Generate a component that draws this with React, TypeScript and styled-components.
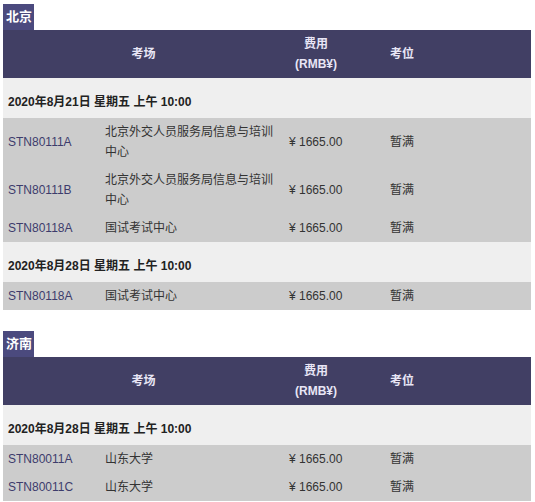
import React from "react";
import styled, { createGlobalStyle } from "styled-components";

const Global = createGlobalStyle`
  html, body { margin: 0; padding: 0; background: #ffffff; }
  body {
    font-family: "Liberation Sans", "Noto Sans CJK SC", Arial, sans-serif;
    font-size: 12px;
    color: #333333;
  }
`;

const Page = styled.div`
  width: 535px;
  padding: 4px 4px 0 3px;
  box-sizing: border-box;
  display: flex;
  flex-direction: column;
  gap: 21px;
`;

const Section = styled.section`
  display: flex;
  flex-direction: column;
  align-items: flex-start;
`;

const CityTag = styled.div`
  background: #4b4a7e;
  color: #ffffff;
  font-weight: bold;
  font-size: 13px;
  height: 26px;
  line-height: 26px;
  padding: 0 2px 0 3px;
`;

const Grid = styled.div`
  align-self: stretch;
  display: grid;
  grid-template-columns: 97px 184px 101px 1fr;
`;

const HeadCell = styled.div<{ $span?: number; $align?: string }>`
  grid-column: span ${(p) => p.$span ?? 1};
  background: #413f64;
  color: #e8e6f6;
  font-weight: bold;
  line-height: 20px;
  height: 48px;
  padding: 4px 5px;
  box-sizing: border-box;
  display: flex;
  align-items: center;
  justify-content: ${(p) => p.$align ?? "flex-start"};
`;

const FeeHead = styled.div`
  width: 54px;
  text-align: center;
`;

const DateRow = styled.div`
  grid-column: 1 / -1;
  background: #efefef;
  font-weight: bold;
  color: #222222;
  line-height: 21px;
  padding: 14px 5px 5px;
`;

const Cell = styled.div<{ $top?: boolean; $code?: boolean }>`
  background: #cccccc;
  padding: 4px 5px;
  line-height: 20px;
  display: flex;
  align-items: ${(p) => (p.$top ? "flex-start" : "center")};
  color: ${(p) => (p.$code ? "#3d3c6c" : "#333333")};
`;

type Row = { code: string; venue: string };
type Group = { date: string; rows: Row[] };
type City = { name: string; groups: Group[] };

const data: City[] = [
  {
    name: "北京",
    groups: [
      {
        date: "2020年8月21日 星期五 上午 10:00",
        rows: [
          { code: "STN80111A", venue: "北京外交人员服务局信息与培训中心" },
          { code: "STN80111B", venue: "北京外交人员服务局信息与培训中心" },
          { code: "STN80118A", venue: "国试考试中心" },
        ],
      },
      {
        date: "2020年8月28日 星期五 上午 10:00",
        rows: [{ code: "STN80118A", venue: "国试考试中心" }],
      },
    ],
  },
  {
    name: "济南",
    groups: [
      {
        date: "2020年8月28日 星期五 上午 10:00",
        rows: [
          { code: "STN80011A", venue: "山东大学" },
          { code: "STN80011C", venue: "山东大学" },
        ],
      },
    ],
  },
];

export default function App() {
  return (
    <>
      <Global />
      <Page>
        {data.map((city) => (
          <Section key={city.name}>
            <CityTag>{city.name}</CityTag>
            <Grid>
              <HeadCell $span={2} $align="center">考场</HeadCell>
              <HeadCell>
                <FeeHead>
                  费用
                  <br />
                  (RMB¥)
                </FeeHead>
              </HeadCell>
              <HeadCell>考位</HeadCell>
              {city.groups.map((g, gi) => (
                <React.Fragment key={gi}>
                  <DateRow>{g.date}</DateRow>
                  {g.rows.map((r, ri) => (
                    <React.Fragment key={ri}>
                      <Cell $code>{r.code}</Cell>
                      <Cell $top>{r.venue}</Cell>
                      <Cell>¥ 1665.00</Cell>
                      <Cell>暂满</Cell>
                    </React.Fragment>
                  ))}
                </React.Fragment>
              ))}
            </Grid>
          </Section>
        ))}
      </Page>
    </>
  );
}
